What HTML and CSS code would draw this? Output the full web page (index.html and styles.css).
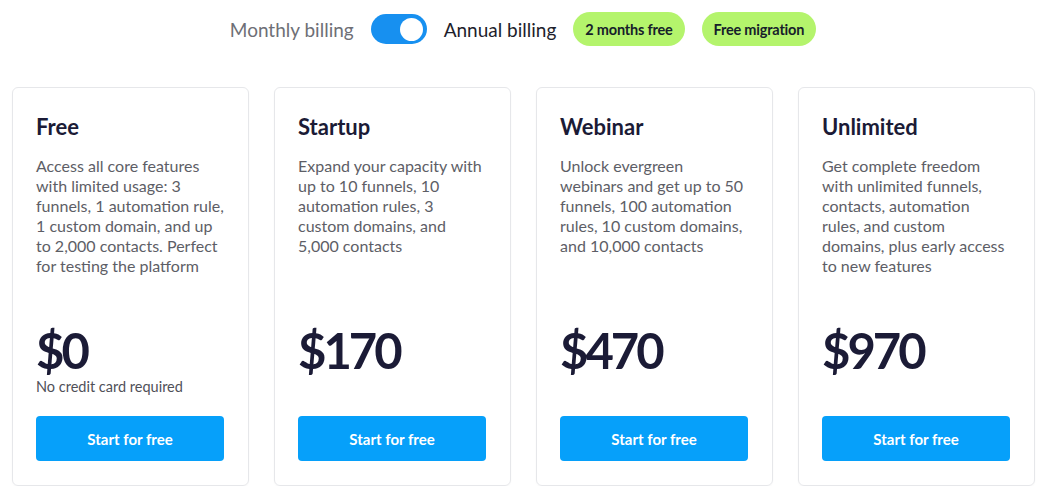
FILE: index.html
```html
<!DOCTYPE html>
<html lang="en">
<head>
    <meta charset="UTF-8">
    <meta name="viewport" content="width=device-width, initial-scale=1">
    <title>Pricing</title>
    <link rel="stylesheet" href="styles.css">
</head>
<body>
    <!-- Billing switch -->
    <div class="billing">
        <span class="billing-label muted">Monthly billing</span>
        <span class="toggle"><span class="knob"></span></span>
        <span class="billing-label">Annual billing</span>
        <span class="badge">2 months free</span>
        <span class="badge">Free migration</span>
    </div>

    <div class="plans">
        <div class="card">
            <h2>Free</h2>
            <p class="desc">Access all core features<br>with limited usage: 3<br>funnels, 1 automation rule,<br>1 custom domain, and up<br>to 2,000 contacts. Perfect<br>for testing the platform</p>
            <div class="price">$0</div>
            <div class="note">No credit card required</div>
            <button class="btn">Start for free</button>
        </div>
        <div class="card">
            <h2>Startup</h2>
            <p class="desc">Expand your capacity with<br>up to 10 funnels, 10<br>automation rules, 3<br>custom domains, and<br>5,000 contacts</p>
            <div class="price">$170</div>
            <div class="note"></div>
            <button class="btn">Start for free</button>
        </div>
        <div class="card">
            <h2>Webinar</h2>
            <p class="desc">Unlock evergreen<br>webinars and get up to 50<br>funnels, 100 automation<br>rules, 10 custom domains,<br>and 10,000 contacts</p>
            <div class="price">$470</div>
            <div class="note"></div>
            <button class="btn">Start for free</button>
        </div>
        <div class="card">
            <h2>Unlimited</h2>
            <p class="desc">Get complete freedom<br>with unlimited funnels,<br>contacts, automation<br>rules, and custom<br>domains, plus early access<br>to new features</p>
            <div class="price">$970</div>
            <div class="note"></div>
            <button class="btn">Start for free</button>
        </div>
    </div>
</body>
</html>
```

FILE: styles.css
```css
body {
    margin: 0;
    font-family: Lato, "Noto Sans", sans-serif;
    background: #fff;
    color: #1b1b36;
}
/* Top billing switch row */
.billing {
    display: flex;
    justify-content: center;
    align-items: center;
    gap: 17px;
    padding-top: 12px;
    height: 34px;
}
.billing-label {
    font-size: 19px;
    color: #1e1e2c;
}
.billing-label.muted {
    color: #6e6f76;
}
.toggle {
    width: 56px;
    height: 30px;
    border-radius: 15px;
    background: #1790f0;
    display: flex;
    align-items: center;
    justify-content: flex-end;
    padding: 0 4px;
    box-sizing: border-box;
}
.knob {
    width: 23px;
    height: 23px;
    border-radius: 50%;
    background: #fff;
}
.badge {
    background: #b4f46c;
    border-radius: 17px;
    height: 34px;
    padding: 0 12px;
    display: flex;
    align-items: center;
    font-size: 14.5px;
    font-weight: 700;
    color: #16202a;
    letter-spacing: -0.2px;
}
/* Plan cards */
.plans {
    display: grid;
    grid-template-columns: repeat(4, 1fr);
    gap: 25px;
    padding: 41px 11px 0 12px;
}
.card {
    border: 1px solid #e6e7ea;
    border-radius: 6px;
    padding: 24px 24px 24px 23px;
    min-height: 399px;
    box-sizing: border-box;
    display: flex;
    flex-direction: column;
    box-shadow: 0 1px 2px rgba(0,0,0,0.03);
}
.card h2 {
    margin: 0 0 14px;
    font-size: 22px;
    line-height: 30px;
    font-weight: 700;
    color: #1b1b36;
}
/* lines are broken by hand to follow the design */
.desc {
    margin: 0 -8px 0 0;
    font-size: 16px;
    line-height: 20px;
    color: #5d5e66;
    white-space: nowrap;
}
.price {
    margin-top: auto;
    font-size: 49px;
    line-height: 56px;
    font-weight: 700;
    color: #1b1b36;
    letter-spacing: -3px;
}
.note {
    min-height: 18px;
    font-size: 14.5px;
    line-height: 18px;
    color: #4f5058;
}
.btn {
    margin-top: 20px;
    height: 45px;
    border: none;
    border-radius: 4px;
    background: #06a0fa;
    color: #fff;
    font-family: inherit;
    font-size: 15px;
    font-weight: 700;
    cursor: pointer;
}
```
